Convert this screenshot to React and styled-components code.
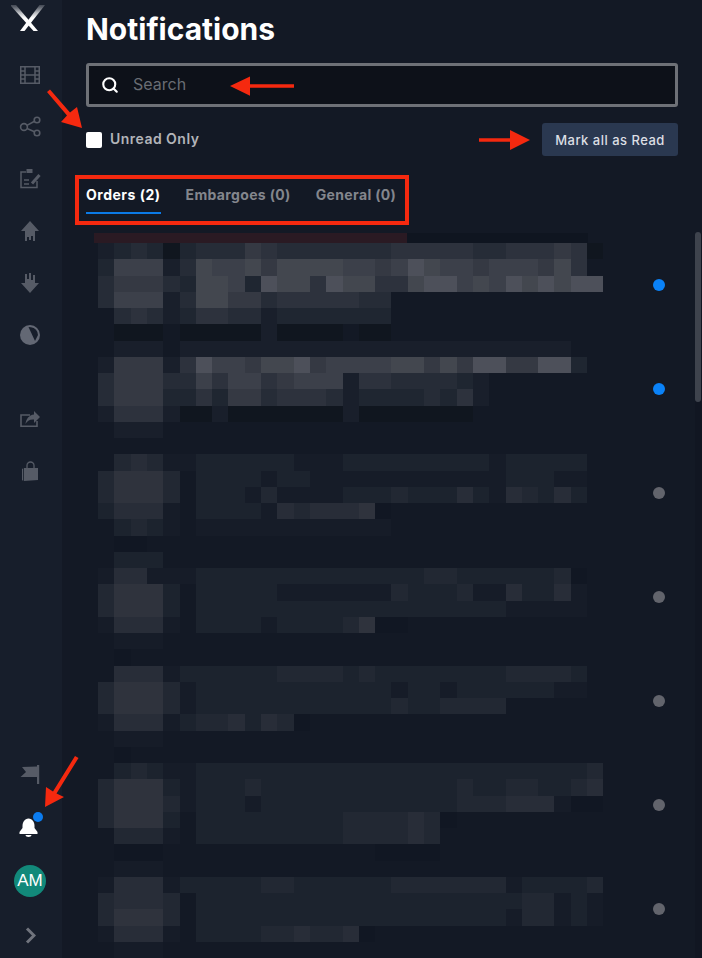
import React from 'react';
import styled, { createGlobalStyle } from 'styled-components';
import { Search } from 'lucide-react';

const Global = createGlobalStyle`
  html, body { margin: 0; padding: 0; height: 958px; overflow: hidden; background: #131925; }
  #root { height: 958px; }
  * { box-sizing: border-box; }
`;

const Page = styled.div`
  position: relative;
  display: flex;
  width: 702px;
  height: 958px;
  overflow: hidden;
  background: #131925;
  font-family: Inter, "Liberation Sans", sans-serif;
`;

const Sidebar = styled.nav`
  flex: 0 0 62px;
  height: 958px;
  padding-right: 2px;
  display: flex;
  flex-direction: column;
  background: #171e2b;
  color: #565b66;
`;

const LogoSlot = styled.div`
  height: 49px;
  padding-top: 3px;
  display: flex;
  justify-content: center;
`;

const IconGroup = styled.div`
  display: flex;
  flex-direction: column;
  margin-top: ${p => p.$gap || 0}px;
`;

const IconSlot = styled.div`
  position: relative;
  height: 52px;
  display: flex;
  align-items: center;
  justify-content: center;
`;

const BottomGroup = styled.div`
  margin-top: auto;
  display: grid;
  grid-template-rows: 52px 54px 52px 51px;
`;

const ChevronSlot = styled(IconSlot)`
  height: 46px;
  align-self: end;
  color: #70747d;
`;

const BellSlot = styled(IconSlot)`
  color: #fff;
  padding-right: 4px;
  padding-top: 2px;
`;

const BellDot = styled.span`
  position: absolute;
  left: 33px;
  top: 11px;
  width: 10px;
  height: 10px;
  border-radius: 50%;
  background: #0b7cf0;
`;

const Avatar = styled.div`
  width: 32px;
  height: 32px;
  border-radius: 50%;
  background: #12897a;
  color: #fff;
  font-family: "Liberation Sans", Arial, sans-serif;
  font-size: 17px;
  display: flex;
  align-items: center;
  justify-content: center;
`;

const Main = styled.main`
  flex: 1;
  min-width: 0;
  padding-left: 24px;
`;

const Header = styled.header`
  padding-right: 24px;
`;

const Title = styled.h1`
  margin: 0;
  height: 58px;
  line-height: 58px;
  font-size: 30px;
  font-weight: 700;
  color: #fff;
`;

const SearchBox = styled.div`
  margin-top: 5px;
  height: 44px;
  display: flex;
  align-items: center;
  gap: 14px;
  padding-left: 12px;
  border: 3px solid #6e7177;
  border-radius: 3px;
  background: #0d1119;
  color: #fff;
`;

const SearchText = styled.span`
  padding-bottom: 2px;
  font-size: 16px;
  color: #696d74;
`;

const FilterRow = styled.div`
  margin-top: 16px;
  height: 33px;
  display: flex;
  align-items: center;
  justify-content: space-between;
`;

const CheckLabel = styled.label`
  display: flex;
  align-items: center;
  gap: 8px;
  font-size: 14px;
  font-weight: 600;
  letter-spacing: 0.47px;
  color: #b2b4b9;
`;

const CheckText = styled.span`
  padding-bottom: 2px;
`;

const CheckBox = styled.span`
  width: 16px;
  height: 16px;
  border-radius: 2px;
  background: #fff;
`;

const MarkButton = styled.button`
  width: 136px;
  height: 33px;
  padding: 0;
  border: 0;
  border-radius: 3px;
  background: #2a3850;
  color: #dcdfe4;
  font-family: inherit;
  font-size: 13px;
  font-weight: 500;
  letter-spacing: 0.48px;
`;

const Tabs = styled.div`
  margin-top: 20px;
  display: flex;
  gap: 25px;
`;

const Tab = styled.div`
  height: 38px;
  line-height: 38px;
  font-size: 14px;
  font-weight: 700;
  letter-spacing: ${p => (p.$active ? '0.5px' : '0.35px')};
  color: ${p => (p.$active ? '#ffffff' : '#83868d')};
  border-bottom: 2px solid ${p => (p.$active ? '#0b7ae6' : 'transparent')};
`;

const ListArea = styled.div`
  margin-top: 19px;
  display: flex;
  justify-content: space-between;
`;

const Rows = styled.div`
  flex: 0 0 609px;
  display: flex;
  flex-direction: column;
`;

const Row = styled.article`
  flex: 0 0 104px;
  height: 104px;
  display: flex;
  align-items: center;
  padding-left: 8px;
`;

const Mosaic = styled.svg`
  display: block;
  flex: 0 0 511px;
`;

const Dot = styled.span`
  width: 12px;
  height: 12px;
  margin-left: 48px;
  border-radius: 50%;
  background: ${p => (p.$unread ? '#0a82f8' : '#62646c')};
`;

const Track = styled.div`
  flex: 0 0 7px;
  height: 725px;
  background: #111622;
`;

const Thumb = styled.div`
  width: 6px;
  height: 170px;
  margin-top: -1px;
  border-radius: 3px;
  background: #3e434d;
`;

const RedBox = styled.div`
  position: absolute;
  left: 75px;
  top: 175px;
  width: 334px;
  height: 50px;
  border: 4px solid #f5290f;
`;

const Arrows = styled.svg`
  position: absolute;
  left: 0;
  top: 0;
  pointer-events: none;
`;

const BRIGHT = {
  z: '#10161f', 1: '#191f2b', 2: '#1f2631', 3: '#262c37', 4: '#2d323d',
  5: '#353943', 6: '#3c404a', 7: '#43474f', 8: '#4d505a',
};

const DIM = {
  z: '#111723', 1: '#161c28', 2: '#1c232e', 3: '#222833', 4: '#282d38',
  5: '#2f333d',
};

const GRID = [
  '1232z 23335 43333 33344 44433 44454 z',
  '26661 37667 57777 66568 76656 66574 .',
  '35553 27762 87748 77447 88676 87878 8',
  '36661 37755 34444 433.. ..... ..... .',
  '.3431 24433 12222 222.. ..... ..... .',
  '.zzz. zzzzz 1zzzz .zz.. ..... ..... .',
  '.111. 11111 11111 11111 11111 1111. .',
  '15551 48665 77856 66677 57588 55882 .',
  '35553 36466 45666 14433 3321. ..... .',
  '35552 24255 34443 12222 3241. ..... .',
  '14441 zz1zz zzzzz 1zzzz zzz.. ..... .',
  '.111. ..... ..... ..... ..... ..... .',
  '..... ..... ..... ..... ..... ..... .',
  '.3431 12222 22111 22222 22221 22222 .',
  '35553 .2222 12211 11111 11111 22211 .',
  '35553 .2221 31111 22232 22421 43242 .',
  '24441 .2222 14344 45z.. ..... ..... .',
  '.2321 .1111 11111 111.. ..... ..... .',
  '.zz.. ..... ..... ..... ..... ..... .',
  '.222. ..... ..... ..... ..... ..... .',
  '14411 12222 22222 22222 33222 2223z .',
  '35552 .2222 21111 11132 22311 42241 .',
  '35552 .2222 22222 22222 22222 11111 .',
  '14441 .2222 12222 35zz. ..... ..... .',
  '.111. ..... ..... ..... ..... ..... .',
  '.z... ..... ..... ..... ..... ..... .',
  '.4441 22222 23333 23222 22222 33332 .',
  '35553 12222 22222 22212 21222 22211 .',
  '35553 12222 22222 22232 23333 ..... .',
  '14441 23342 43z.. ..... ..... ..... .',
  '.111. ..... ..... ..... ..... ..... .',
  '.z... ..... ..... ..... ..... ..... .',
  '.2321 12222 22222 22222 22222 22222 3',
  '35552 12223 22222 22222 22322 33223 4',
  '35553 12221 22222 22222 22333 4441z z',
  '35552 .2222 22222 33334 3z... ..... .',
  '.3331 .2222 22222 33334 3.... ..... .',
  '.zzz. ..... ..... ..zzz z.... ..... .',
  '.111. ..... ..... ..... ..... ..... .',
  '14441 22222 33222 22233 33333 12222 3',
  '34443 .2222 22222 22222 22222 23312 1',
  '35553 .2222 22222 22222 22222 13312 1',
  '14441 .2222 33433 4z... ..... ..... .',
  '.111. ..... ..... ..... ..... ..... .',
];

const cells = [];
GRID.forEach((line, k) => {
  const palette = k >= 13 ? DIM : BRIGHT;
  [...line.replace(/ /g, '')].forEach((ch, n) => {
    if (ch === '.') return;
    const x = Math.round(98 + 16.3 * n);
    const y = Math.round(243 + 16.25 * k);
    cells.push({
      x, y,
      w: Math.round(98 + 16.3 * (n + 1)) - x,
      h: Math.round(243 + 16.25 * (k + 1)) - y,
      fill: palette[ch],
    });
  });
});

const ROWS = [true, true, false, false, false, false, false];

const MosaicBlock = ({ top }) => (
  <Mosaic width="511" height="104" viewBox={`94 ${top} 511 104`} shapeRendering="crispEdges">
    <rect x="94" y="233" width="313" height="10" fill="#2a1a23" />
    <rect x="407" y="233" width="181" height="10" fill="#0f1520" />
    {cells.filter(c => c.y + c.h > top && c.y < top + 104).map(c => (
      <rect key={`${c.x}-${c.y}`} x={c.x} y={c.y} width={c.w} height={c.h} fill={c.fill} />
    ))}
  </Mosaic>
);

const Logo = () => (
  <svg width="38" height="30" viewBox="11 3 38 30">
    <defs>
      <linearGradient id="xfade" gradientUnits="userSpaceOnUse" x1="0" y1="4" x2="0" y2="18">
        <stop offset="0" stopColor="#6b7079" stopOpacity="0.4" />
        <stop offset="0.6" stopColor="#b4b7bc" />
        <stop offset="1" stopColor="#ffffff" />
      </linearGradient>
    </defs>
    <polygon points="10,5 16,5 38,31 33.5,31" fill="url(#xfade)" />
    <polygon points="45,5 39.5,5 20,31 24.5,31" fill="url(#xfade)" />
  </svg>
);

const Film = () => (
  <svg width="22" height="20" viewBox="19 65 22 20" fill="none" stroke="currentColor" strokeWidth="1.5">
    <rect x="20.75" y="66.75" width="18.5" height="16.5" />
    <path d="M25 67V83M35 67V83M25 75H35M21 71H25M21 75H25M21 79H25M35 71H39M35 75H39M35 79H39" />
  </svg>
);

const Share = () => (
  <svg width="22" height="22" viewBox="19 116 22 22" fill="none" stroke="currentColor" strokeWidth="1.6">
    <circle cx="24" cy="127" r="3.4" />
    <circle cx="37" cy="120" r="2.8" />
    <circle cx="37" cy="133" r="2.8" />
    <path d="M27 125.4L34.5 121.3M27 128.6L34.5 131.7" />
  </svg>
);

const Clipboard = () => (
  <svg width="22" height="22" viewBox="19 168 22 22" fill="none" stroke="currentColor" strokeWidth="1.5">
    <path d="M26 172H21V187.5H37V181" />
    <rect x="26.5" y="169" width="6" height="4" fill="currentColor" stroke="none" />
    <path d="M32 183.5L39.5 175" strokeWidth="3" />
    <path d="M24 180H29M24 184H29" />
  </svg>
);

const UploadIcon = () => (
  <svg width="20" height="22" viewBox="20 220 20 22" fill="currentColor">
    <path d="M30 221L39 231H35V241H33V236H31V240H29V237H27V241H25V231H21Z" />
  </svg>
);

const DownloadIcon = () => (
  <svg width="20" height="22" viewBox="20 272 20 22" fill="currentColor">
    <path d="M30 293L39 283H35V275H33V280H31V273H29V279H27V274H25V283H21Z" />
  </svg>
);

const Pie = () => (
  <svg width="22" height="22" viewBox="19 323 22 22">
    <circle cx="30" cy="334" r="10" fill="#636874" />
    <path d="M28.5 326L35 340L38 334A8 8 0 0 0 31 326.2Z" fill="#171e2b" />
  </svg>
);

const ShareBox = () => (
  <svg width="22" height="18" viewBox="19 411 22 18" fill="currentColor">
    <path d="M30 416H21V427.2H37V422" fill="none" stroke="currentColor" strokeWidth="1.6" />
    <path d="M34 412L40 418L34 424V420.5C30 420 27 422 25.5 425C26 420 29 416 34 415.5Z" />
  </svg>
);

const Bag = () => (
  <svg width="18" height="22" viewBox="21 460 18 22" fill="currentColor">
    <path d="M24 468H38V480L24 481Z" />
    <path d="M22 469L23.2 468.2V481L22 480Z" />
    <path d="M27 469V465.5A3.5 3.5 0 0 1 34 465.5V469" fill="none" stroke="currentColor" strokeWidth="1.3" />
  </svg>
);

const Flag = () => (
  <svg width="20" height="20" viewBox="19 767 20 20" fill="currentColor">
    <path d="M36 768.5L21 769L25 774L19.5 779H36Z" />
    <rect x="36" y="767" width="2.2" height="19" />
  </svg>
);

const Bell = () => (
  <svg width="19" height="20" viewBox="18.5 819 19 20" fill="currentColor">
    <path d="M28 819.5C24 820 22 823 22 827V829L19 833V835H37V833L34 829V827C34 823 32 820 28 819.5Z" />
    <path d="M25 836H31C31 838.6 25 838.6 25 836Z" />
  </svg>
);

const Chevron = () => (
  <svg width="11" height="17" viewBox="25 926.5 11 17" fill="none" stroke="currentColor" strokeWidth="3">
    <path d="M27 928L34 935L27 942" />
  </svg>
);

const App = () => (
  <Page>
    <Global />
    <Sidebar>
      <LogoSlot><Logo /></LogoSlot>
      <IconGroup>
        <IconSlot><Film /></IconSlot>
        <IconSlot><Share /></IconSlot>
        <IconSlot><Clipboard /></IconSlot>
        <IconSlot><UploadIcon /></IconSlot>
        <IconSlot><DownloadIcon /></IconSlot>
        <IconSlot><Pie /></IconSlot>
      </IconGroup>
      <IconGroup $gap={32}>
        <IconSlot><ShareBox /></IconSlot>
        <IconSlot><Bag /></IconSlot>
      </IconGroup>
      <BottomGroup>
        <IconSlot><Flag /></IconSlot>
        <BellSlot><Bell /><BellDot /></BellSlot>
        <IconSlot><Avatar>AM</Avatar></IconSlot>
        <ChevronSlot><Chevron /></ChevronSlot>
      </BottomGroup>
    </Sidebar>
    <Main>
      <Header>
        <Title>Notifications</Title>
        <SearchBox>
          <Search size={18} strokeWidth={2.8} />
          <SearchText>Search</SearchText>
        </SearchBox>
        <FilterRow>
          <CheckLabel><CheckBox /><CheckText>Unread Only</CheckText></CheckLabel>
          <MarkButton>Mark all as Read</MarkButton>
        </FilterRow>
        <Tabs>
          <Tab $active>Orders (2)</Tab>
          <Tab>Embargoes (0)</Tab>
          <Tab>General (0)</Tab>
        </Tabs>
      </Header>
      <ListArea>
        <Rows>
          {ROWS.map((unread, i) => (
            <Row key={i}>
              <MosaicBlock top={233 + 104 * i} />
              <Dot $unread={unread} />
            </Row>
          ))}
        </Rows>
        <Track><Thumb /></Track>
      </ListArea>
    </Main>
    <RedBox />
    <Arrows width="702" height="958" viewBox="0 0 702 958" fill="#f5290f" stroke="none">
      <path d="M230 86L250 76.5V84.3H294V87.7H250V95.7Z" />
      <path d="M530 140L510 130V138.3H479V141.7H510V150Z" />
      <path d="M82 128L61 122L67 115.5L47 92L50 89.5L70 112.5L77 107Z" />
      <path d="M45 807L46 787L53 791.5L75 756L78.5 758L56.5 793.5L64 797Z" />
    </Arrows>
  </Page>
);

export default App;
